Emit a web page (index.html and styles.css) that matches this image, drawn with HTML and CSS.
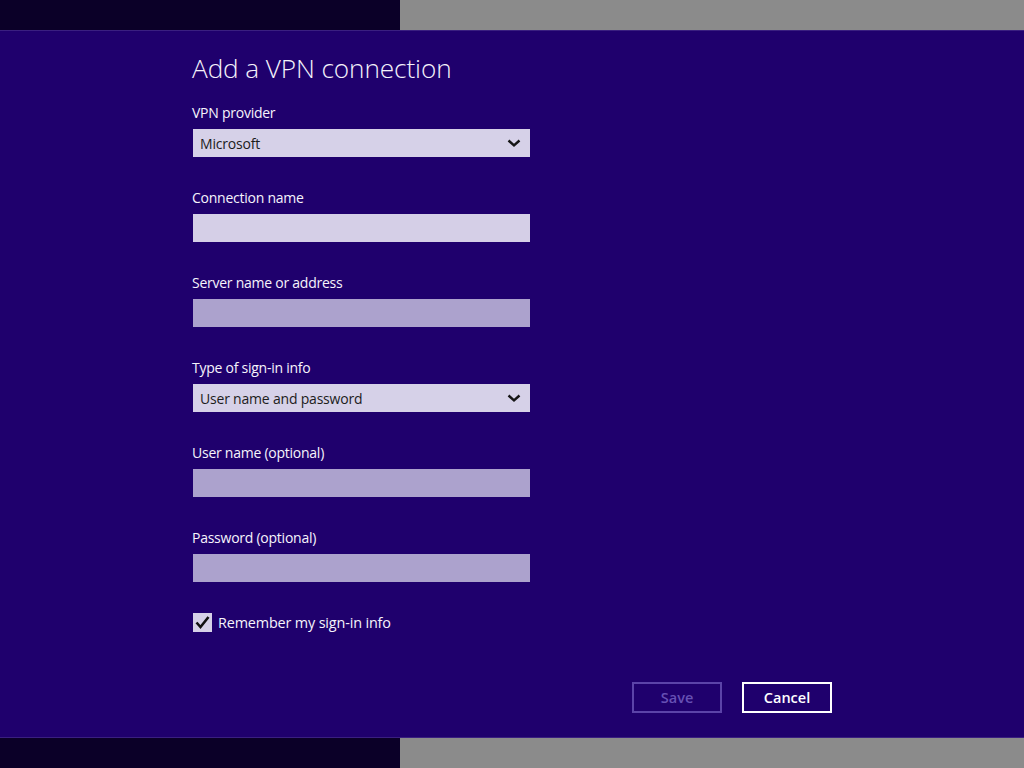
FILE: index.html
```html
<!DOCTYPE html>
<html>
<head>
<meta charset="utf-8">
<link rel="stylesheet" href="styles.css">
</head>
<body>
<div class="band band-top">
  <div class="band-dark"></div>
  <div class="band-gray"></div>
</div>
<main class="dialog">
  <h1 class="title">Add a VPN connection</h1>
  <div class="group">
    <div class="label">VPN provider</div>
    <div class="field select"><span>Microsoft</span>
      <svg class="chev" width="14" height="9" viewBox="0 0 14 9"><path d="M1.5 1.5 L7 6.5 L12.5 1.5" fill="none" stroke="#161616" stroke-width="2.4"/></svg>
    </div>
  </div>
  <div class="group">
    <div class="label">Connection name</div>
    <div class="field input"></div>
  </div>
  <div class="group">
    <div class="label">Server name or address</div>
    <div class="field input dim"></div>
  </div>
  <div class="group">
    <div class="label">Type of sign-in info</div>
    <div class="field select"><span>User name and password</span>
      <svg class="chev" width="14" height="9" viewBox="0 0 14 9"><path d="M1.5 1.5 L7 6.5 L12.5 1.5" fill="none" stroke="#161616" stroke-width="2.4"/></svg>
    </div>
  </div>
  <div class="group">
    <div class="label">User name (optional)</div>
    <div class="field input dim"></div>
  </div>
  <div class="group">
    <div class="label">Password (optional)</div>
    <div class="field input dim"></div>
  </div>
  <div class="check-row">
    <div class="checkbox">
      <svg width="19" height="19" viewBox="0 0 19 19"><path d="M3.5 9.5 L7.5 14 L15.5 4" fill="none" stroke="#111" stroke-width="2.6"/></svg>
    </div>
    <span class="check-label">Remember my sign-in info</span>
  </div>
  <div class="buttons">
    <button class="btn btn-disabled">Save</button>
    <button class="btn btn-primary">Cancel</button>
  </div>
</main>
<div class="band band-bottom">
  <div class="band-dark"></div>
  <div class="band-gray"></div>
</div>
</body>
</html>
```
FILE: styles.css
```css
html, body {
  margin: 0;
  padding: 0;
  width: 1024px;
  height: 768px;
  overflow: hidden;
  background: #1f006d;
  font-family: "Open Sans", "Noto Sans", "Liberation Sans", sans-serif;
}
.band {
  display: flex;
  height: 30px;
}
.band-top { border-bottom: 1px solid #3a1f80; }
.band-bottom { border-top: 1px solid #3a1f80; }
.band-dark {
  width: 400px;
  background: #0b0028;
}
.band-gray {
  flex: 1;
  background: #8b8b8b;
}
.dialog {
  height: 706px;
  box-sizing: border-box;
  padding: 19px 0 0 193px;
  background: #1f006d;
  color: #ffffff;
  display: flex;
  flex-direction: column;
}
.title {
  margin: 0 0 16px -1px;
  font-size: 26.2px;
  font-weight: 300;
  line-height: 36px;
  height: 36px;
  color: #f4f2fb;
  letter-spacing: -0.1px;
}
.group {
  display: flex;
  flex-direction: column;
  margin-bottom: 30px;
}
.label {
  font-size: 14px;
  line-height: 20px;
  height: 20px;
  padding-top: 1px;
  margin-left: -1px;
  margin-bottom: 6px;
  color: #f6f4fc;
  letter-spacing: -0.25px;
}
.field {
  width: 337px;
  height: 28px;
  box-sizing: border-box;
}
.select {
  background: #d6d1e8;
  display: flex;
  align-items: center;
  justify-content: space-between;
  padding: 0 9px 0 7px;
  color: #1c1c1c;
  font-size: 14px;
  letter-spacing: -0.2px;
}
.chev { display: block; margin-top: 1px; }
.input { background: #d5cfe7; }
.input.dim { background: #aca2cd; }
.check-row {
  display: flex;
  align-items: center;
  height: 20px;
}
.checkbox {
  width: 19px;
  height: 19px;
  background: #d6d1e8;
  margin-right: 6px;
}
.checkbox svg { display: block; }
.check-label {
  font-size: 14.4px;
  color: #f6f4fc;
  letter-spacing: -0.15px;
}
.buttons {
  display: flex;
  gap: 20px;
  margin-top: 50px;
  margin-left: 439px;
}
.btn {
  width: 90px;
  height: 31px;
  box-sizing: border-box;
  background: #1f006d;
  font-family: inherit;
  font-size: 14.5px;
  font-weight: 600;
  padding: 0;
}
.btn-disabled {
  border: 2px solid #5b43a8;
  color: #6650b4;
}
.btn-primary {
  border: 2px solid #ffffff;
  color: #ffffff;
}
```
